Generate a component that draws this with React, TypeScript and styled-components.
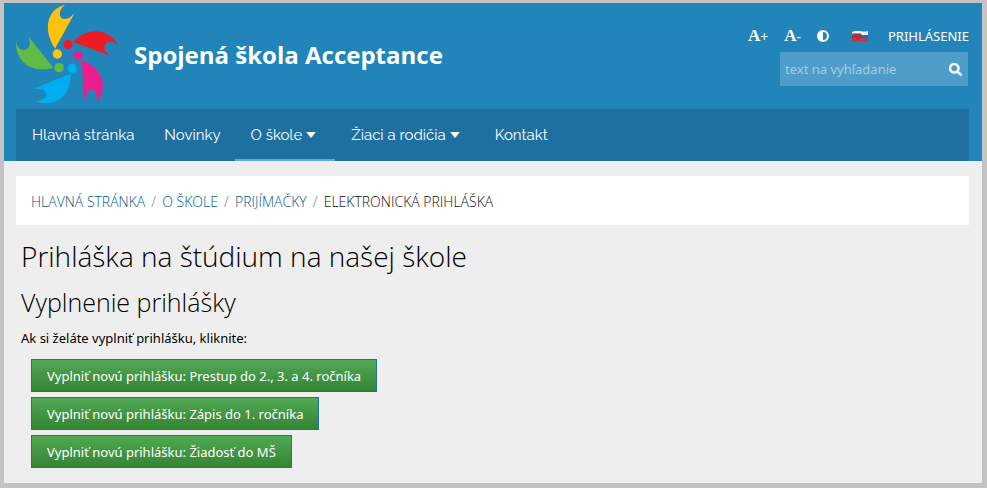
import React from 'react';
import styled, { createGlobalStyle } from 'styled-components';
import { FaSearch } from 'react-icons/fa';

const GlobalStyle = createGlobalStyle`
  * { box-sizing: border-box; }
  body {
    margin: 0;
    background: #c3c3c3;
    font-family: 'Open Sans', 'Noto Sans', sans-serif;
    font-size: 13px;
    color: #000;
  }
`;

const Page = styled.div`
  margin: 3px 5px 5px 4px;
  min-height: calc(100vh - 8px);
  background: #eeeeee;
`;

const Header = styled.header`
  background: #2185ba;
  padding: 0 13px 0 12px;
`;

const HeaderTop = styled.div`
  display: flex;
  align-items: flex-start;
  height: 106px;
`;

const Brand = styled.a`
  display: flex;
  align-items: center;
  gap: 14px;
  padding-top: 1px;
  color: #fff;
  font-size: 24px;
  font-weight: 700;
  text-decoration: none;
`;

const Tools = styled.div`
  margin-left: auto;
  padding-top: 22px;
`;

const ToolLinks = styled.div`
  display: flex;
  align-items: center;
  justify-content: flex-end;
  height: 22px;
`;

const ToolButton = styled.button<{ $gap: number }>`
  display: flex;
  align-items: center;
  margin: 0 ${(p) => p.$gap}px 0 0;
  padding: 0;
  border: 0;
  background: none;
  color: #fff;
  font: 14px 'Open Sans', sans-serif;
  cursor: pointer;
`;

const SerifA = styled.span`
  font: 700 17px 'Liberation Serif', serif;
`;

const Login = styled.a`
  color: #fff;
  font: 13px 'Noto Sans', sans-serif;
  text-decoration: none;
`;

const Search = styled.form`
  display: flex;
  align-items: center;
  width: 188px;
  height: 34px;
  margin: 5px 1px 0 auto;
  background: #4e9dc9;
`;

const SearchInput = styled.input`
  flex: 1;
  min-width: 0;
  height: 100%;
  padding: 0 5px;
  border: 0;
  background: transparent;
  color: #fff;
  font: 13px 'Noto Sans', sans-serif;
  &::placeholder { color: #a3cee5; opacity: 1; }
`;

const SearchButton = styled.button`
  display: flex;
  padding: 0 6px;
  border: 0;
  background: none;
  color: #fff;
  font-size: 13px;
  cursor: pointer;
  path { stroke: #fff; stroke-width: 16px; }
`;

const Nav = styled.nav`
  display: flex;
  height: 52px;
  background: #1d709f;
`;

const NavItem = styled.a<{ $active?: boolean; $menu?: boolean }>`
  display: flex;
  align-items: center;
  gap: 4px;
  padding: 2px ${(p) => (p.$menu ? 19 : 14)}px 0 16px;
  border-bottom: 2px solid ${(p) => (p.$active ? '#64a9d3' : 'transparent')};
  color: #fff;
  font: 15px Raleway, Lato, sans-serif;
  text-decoration: none;
`;

const Breadcrumb = styled.nav`
  display: flex;
  align-items: center;
  height: 49px;
  margin: 15px 13px 0 12px;
  padding: 2px 15px 0;
  background: #fff;
  color: #111;
  font-size: 14px;
  font-weight: 300;
`;

const Crumb = styled.a`
  color: #04588a;
  text-decoration: none;
`;

const Separator = styled.span`
  width: 17px;
  text-align: center;
  color: #777;
`;

const Main = styled.main`
  padding: 11px 17px 14px;
`;

const Title = styled.h1`
  margin: 0;
  font-size: 28px;
  line-height: 40px;
  font-weight: 300;
`;

const Subtitle = styled.h2`
  margin: 9px 0 0;
  font-size: 25px;
  line-height: 34px;
  font-weight: 300;
`;

const Intro = styled.p`
  margin: 9px 0 0;
  font: 13px/20px 'Noto Sans', sans-serif;
`;

const Actions = styled.div`
  display: flex;
  flex-direction: column;
  align-items: flex-start;
  gap: 5px;
  margin: 11px 0 0 10px;
`;

const ActionButton = styled.button`
  height: 33px;
  padding: 0 15px;
  border: 1px solid #1d709f;
  background: linear-gradient(#52a954, #348434);
  color: #fff;
  font: 13px 'Noto Sans', sans-serif;
  cursor: pointer;
`;

function Logo() {
  return (
    <svg width="104" height="101" viewBox="48 12 312 303" aria-hidden="true">
      <g fill="#ffc20e">
        <path d="M165 146C132 97 133 28 200 13C178 21 171 55 193 57C207 58 216 47 224 39Z" />
        <circle cx="172" cy="162" r="14" />
      </g>
      <g fill="#ed1c24">
        <path d="M219 126C261 79 329 83 355 138C342 120 315 124 313 142C312 154 322 160 333 168Z" />
        <circle cx="204" cy="133" r="14" />
      </g>
      <g fill="#ec1e8f">
        <path d="M245 179C302 202 330 253 291 311C294 294 289 270 276 269C262 269 259 288 253 302Z" />
        <circle cx="234" cy="167" r="14" />
      </g>
      <g fill="#00aeef">
        <path d="M213 221C211 289 170 325 102 303C119 306 138 297 138 283C138 269 121 266 99 266Z" />
        <circle cx="217" cy="205" r="14" />
      </g>
      <g fill="#62bb46">
        <path d="M160 203C98 222 43 186 48 120C48 139 61 153 75 150C92 146 91 127 85 109Z" />
        <circle cx="177" cy="203" r="14" />
      </g>
    </svg>
  );
}

function Contrast() {
  return (
    <svg width="12" height="12" viewBox="0 0 12 12" aria-hidden="true">
      <circle cx="6" cy="6" r="5" fill="none" stroke="#fff" strokeWidth="2" />
      <path fill="#fff" d="M6 1A5 5 0 0 0 6 11Z" />
    </svg>
  );
}

function Flag() {
  return (
    <svg width="16" height="11" viewBox="0 0 16 11" aria-hidden="true">
      <path fill="#f1f0f2" d="M0 1Q4 -1 8 0T16 0V4H0Z" />
      <path fill="#2863b3" d="M0 4Q4 2 8 4T16 4V7H0Z" />
      <path fill="#e9272c" d="M0 7Q4 6 8 7T16 7V10Q12 11 8 10T0 11Z" />
      <path fill="#b0283c" opacity=".6" d="M0 2H4V7H0Z" />
      <path fill="#e01f2e" stroke="#863c58" d="M4 3H9V5Q8 8 6 8Q4 8 4 5Z" />
    </svg>
  );
}

function Caret() {
  return (
    <svg width="10" height="6" viewBox="0 0 10 6" aria-hidden="true">
      <path fill="#fff" d="M1 0H9Q10 0 9 1L5.500 5.500Q5 6 4.500 5.500L1 1Q0 0 1 0Z" />
    </svg>
  );
}

const menu = [
  { label: 'Hlavná stránka' },
  { label: 'Novinky' },
  { label: 'O škole', menu: true, active: true },
  { label: 'Žiaci a rodičia', menu: true },
  { label: 'Kontakt' },
];

const crumbs = ['HLAVNÁ STRÁNKA', 'O ŠKOLE', 'PRIJÍMAČKY'];

const applications = ['Prestup do 2., 3. a 4. ročníka', 'Zápis do 1. ročníka', 'Žiadosť do MŠ'];

export default function App() {
  return (
    <>
      <GlobalStyle />
      <Page>
        <Header>
          <HeaderTop>
            <Brand href="#">
              <Logo />
              <span>Spojená škola Acceptance</span>
            </Brand>
            <Tools>
              <ToolLinks>
                <ToolButton $gap={16}><SerifA>A</SerifA>+</ToolButton>
                <ToolButton $gap={16}><SerifA>A</SerifA>-</ToolButton>
                <ToolButton $gap={23} aria-label="Kontrast"><Contrast /></ToolButton>
                <ToolButton $gap={20} aria-label="Slovenčina"><Flag /></ToolButton>
                <Login href="#">PRIHLÁSENIE</Login>
              </ToolLinks>
              <Search>
                <SearchInput type="text" placeholder="text na vyhľadanie" aria-label="text na vyhľadanie" />
                <SearchButton type="button" aria-label="Hľadať"><FaSearch /></SearchButton>
              </Search>
            </Tools>
          </HeaderTop>
          <Nav>
            {menu.map((item) => (
              <NavItem key={item.label} href="#" $active={item.active} $menu={item.menu}>
                {item.label}
                {item.menu && <Caret />}
              </NavItem>
            ))}
          </Nav>
        </Header>
        <Breadcrumb>
          {crumbs.map((crumb) => (
            <React.Fragment key={crumb}>
              <Crumb href="#">{crumb}</Crumb>
              <Separator>/</Separator>
            </React.Fragment>
          ))}
          <span>ELEKTRONICKÁ PRIHLÁŠKA</span>
        </Breadcrumb>
        <Main>
          <Title>Prihláška na štúdium na našej škole</Title>
          <Subtitle>Vyplnenie prihlášky</Subtitle>
          <Intro>Ak si želáte vyplniť prihlášku, kliknite:</Intro>
          <Actions>
            {applications.map((name) => (
              <ActionButton key={name} type="button">Vyplniť novú prihlášku: {name}</ActionButton>
            ))}
          </Actions>
        </Main>
      </Page>
    </>
  );
}
